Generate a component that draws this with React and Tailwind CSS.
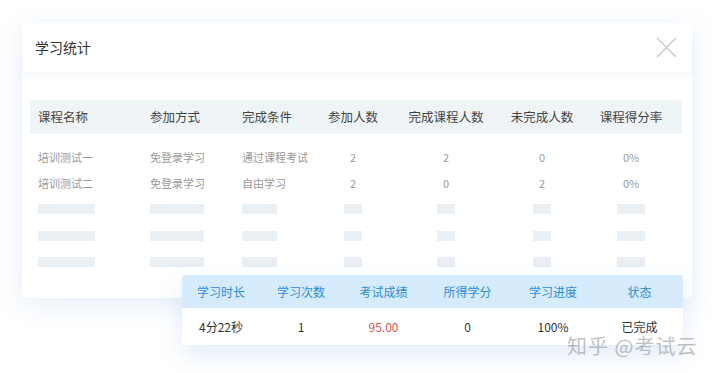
const cols = "grid grid-cols-[112px_92px_84px_70px_116px_76px_1fr]";

const headers = ["课程名称", "参加方式", "完成条件", "参加人数", "完成课程人数", "未完成人数", "课程得分率"];

const rows = [
  ["培训测试一", "免登录学习", "通过课程考试", "2", "2", "0", "0%"],
  ["培训测试二", "免登录学习", "自由学习", "2", "0", "2", "0%"],
];

// skeleton bar widths per column
const bars = ["w-[57px]", "w-[54px]", "w-[35px]", "w-[18px]", "w-[18px]", "w-[18px]", "w-[28px]"];

function Cell({ i, children, className = "" }) {
  const align = i < 3 ? "pl-[8px] text-left" : "text-center";
  return <div className={`${align} ${className}`}>{children}</div>;
}

function CloseIcon() {
  return (
    <svg width="21" height="21" viewBox="0 0 21 21" className="text-[#c4c8cc]">
      <path d="M1 1L20 20M20 1L1 20" stroke="currentColor" strokeWidth="1.3" fill="none" />
    </svg>
  );
}

function ResultCard() {
  const g = "grid grid-cols-[78px_82px_83px_85px_86px_1fr]";
  return (
    <div className="absolute left-[182px] top-[275px] w-[501px] rounded-[3px] bg-white shadow-[0_10px_24px_rgba(90,150,220,0.18)] overflow-hidden">
      <div className={`${g} h-[33px] items-center bg-[#d6ecfc] text-[12px] text-[#2d8bd6] text-center`}>
        <div>学习时长</div>
        <div>学习次数</div>
        <div>考试成绩</div>
        <div>所得学分</div>
        <div>学习进度</div>
        <div>状态</div>
      </div>
      <div className={`${g} h-[37px] items-center text-[12px] text-[#333] text-center`}>
        <div>4分22秒</div>
        <div>1</div>
        <div className="text-[#d9534f]">95.00</div>
        <div>0</div>
        <div>100%</div>
        <div>已完成</div>
      </div>
    </div>
  );
}

export default function App() {
  return (
    <div
      className="relative w-[720px] h-[373px] bg-white overflow-hidden"
      style={{ fontFamily: '"Noto Sans CJK SC", "Noto Sans", sans-serif' }}
    >
      <div className="pt-[23px] pl-[22px]">
        <div className="w-[670px] h-[275px] bg-white rounded-[3px] shadow-[0_6px_28px_rgba(90,150,220,0.16)]">
          <div className="h-[49px] flex items-center justify-between pl-[13px] pr-[15px] shadow-[0_5px_6px_rgba(200,210,225,0.16)]">
            <span className="text-[14px] text-[#333]">学习统计</span>
            <CloseIcon />
          </div>
          <div className="ml-[8px] mr-[10px] mt-[28px]">
            <div className={`${cols} h-[34px] items-center bg-[#eff4f7] text-[12.5px] text-[#444]`}>
              {headers.map((h, i) => (
                <Cell key={h} i={i}>{h}</Cell>
              ))}
            </div>
            <div className="pt-[10px]">
              {rows.map((r, ri) => (
                <div key={ri} className={`${cols} h-[26px] items-center text-[11px] text-[#9a9a9a]`}>
                  {r.map((c, i) => (
                    <Cell key={i} i={i}>{c}</Cell>
                  ))}
                </div>
              ))}
              {[0, 1, 2].map((k) => (
                <div key={k} className={`${cols} h-[26.5px] items-center`}>
                  {bars.map((w, i) => (
                    <Cell key={i} i={i} className={i < 3 ? "" : "flex justify-center"}>
                      <div className={`${w} h-[10px] bg-[#e9eff3]`} />
                    </Cell>
                  ))}
                </div>
              ))}
            </div>
          </div>
        </div>
      </div>

      <ResultCard />

      <div className="absolute left-[567px] top-[331px] text-[20px] tracking-[1px] text-[rgba(140,140,140,0.55)]">
        知乎 @考试云
      </div>
    </div>
  );
}
